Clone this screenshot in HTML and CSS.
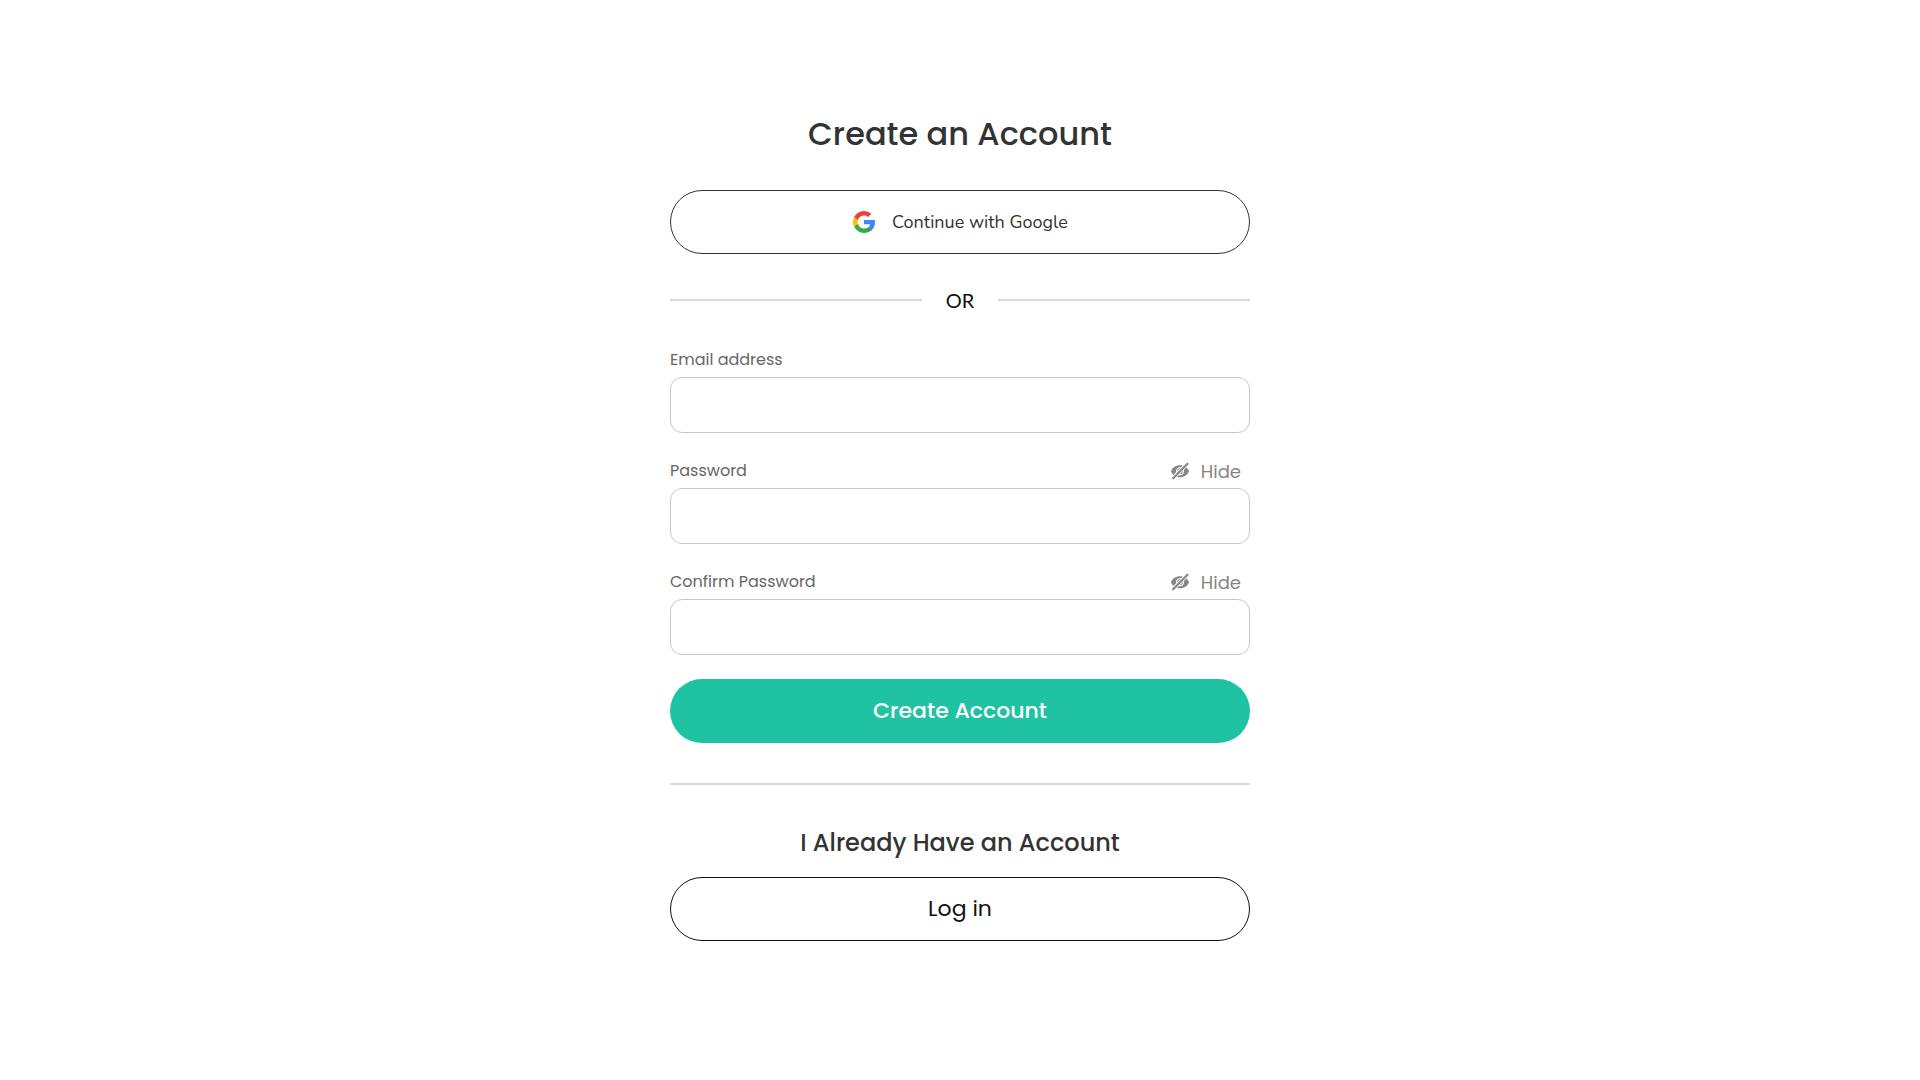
FILE: index.html
```html
<!DOCTYPE html>
<html lang="en">
<head>
<meta charset="utf-8">
<meta name="viewport" content="width=device-width, initial-scale=1">
<title>Create an Account</title>
<link rel="stylesheet" href="styles.css">
</head>
<body>
<svg class="sprite" aria-hidden="true">
  <symbol id="eye-off" viewBox="0 0 24 24">
    <path d="M3 12.2C4 8.8 7.700 6.200 12 6.200s8 2.600 9 6c-1 3.400-4.700 6-9 6s-8-2.600-9-6z" fill="#868686"/>
    <circle cx="12" cy="12.200" r="3.400" fill="none" stroke="#fff" stroke-width="1.100"/>
    <path d="M4 20.100L20 4.100" stroke="#fff" stroke-width="4"/>
    <path d="M5.100 19.200L19.500 4.800" stroke="#868686" stroke-width="2.200" stroke-linecap="round"/>
  </symbol>
</svg>
<main class="signup">
  <h1 class="title">Create an Account</h1>
  <button class="button button-google" type="button">
    <svg class="icon" viewBox="0 0 24 24" aria-hidden="true">
      <path fill="#4285f4" d="M23 12.250c0-.780-.070-1.530-.200-2.250H12v4.260h6.170a5.280 5.280 0 0 1-2.290 3.460v2.770h3.570C21.540 18.570 23 15.680 23 12.250z"/>
      <path fill="#34a853" d="M12 23c2.970 0 5.460-.980 7.450-2.750l-3.570-2.770c-.990.660-2.230 1.060-3.880 1.060-2.860 0-5.290-1.930-6.160-4.530H2.180v2.840A11 11 0 0 0 12 23z"/>
      <path fill="#fbbc05" d="M5.840 14.090a6.610 6.610 0 0 1 0-4.180V7.070H2.180a11 11 0 0 0 0 9.860z"/>
      <path fill="#ea4335" d="M12 5.380c1.620 0 3.060.560 4.210 1.640l3.150-3.150A10.950 10.950 0 0 0 2.180 7.070l3.660 2.840C6.710 7.310 9.140 5.380 12 5.380z"/>
    </svg>
    Continue with Google
  </button>
  <div class="or">OR</div>
  <form class="form">
    <div class="field">
      <div class="field-head"><label for="email">Email address</label></div>
      <input class="input" id="email" type="email">
    </div>
    <div class="field">
      <div class="field-head">
        <label for="password">Password</label>
        <button class="toggle" type="button"><svg class="icon" aria-hidden="true"><use href="#eye-off"/></svg>Hide</button>
      </div>
      <input class="input" id="password" type="password">
    </div>
    <div class="field">
      <div class="field-head">
        <label for="confirm">Confirm Password</label>
        <button class="toggle" type="button"><svg class="icon" aria-hidden="true"><use href="#eye-off"/></svg>Hide</button>
      </div>
      <input class="input" id="confirm" type="password">
    </div>
    <button class="button button-primary" type="submit">Create Account</button>
  </form>
  <hr class="divider">
  <h2 class="subtitle">I Already Have an Account</h2>
  <button class="button button-login" type="button">Log in</button>
</main>
</body>
</html>
```

FILE: styles.css
```css
* {
  box-sizing: border-box;
}

body {
  margin: 0;
  background: #fff;
  color: #111;
  font-family: Poppins, Inter, "Open Sans", sans-serif;
}

.sprite {
  display: none;
}

.signup {
  display: flex;
  flex-direction: column;
  max-width: 628px;
  margin: 0 auto;
  padding: 110px 24px 40px;
}

.title {
  margin: 0 0 32px;
  color: #333;
  font-size: 32px;
  font-weight: 500;
  line-height: 48px;
  text-align: center;
}

.icon {
  flex: none;
  width: 24px;
  height: 24px;
}

.button {
  display: flex;
  align-items: center;
  justify-content: center;
  width: 100%;
  height: 64px;
  padding: 0 24px 2px;
  border: 1px solid #333;
  border-radius: 32px;
  background: #fff;
  color: #111;
  font-family: inherit;
  font-size: 22px;
  cursor: pointer;
}

.button-google {
  gap: 16px;
  padding: 0 24px;
  color: #333;
  font-family: Avenir, Nunito, Lato, sans-serif;
  font-size: 18px;
}

.button-primary {
  border: 0;
  background: #1fc3a3;
  color: #fff;
  font-weight: 500;
}

.button-login {
  border-color: #111;
}

.or {
  display: flex;
  align-items: center;
  gap: 24px;
  margin: 30px 0;
  font-family: Avenir, Lato, sans-serif;
  font-size: 20px;
  line-height: 32px;
}

.or::before,
.or::after {
  flex: 1;
  height: 2px;
  background: #d9d9d9;
  content: "";
}

.form {
  display: flex;
  flex-direction: column;
  gap: 24px;
}

.field-head {
  display: flex;
  align-items: center;
  justify-content: space-between;
  height: 26px;
  margin-bottom: 5px;
  color: #666;
  font-size: 16px;
}

.toggle {
  display: flex;
  align-items: center;
  gap: 9px;
  padding: 2px 9px 0;
  border: 0;
  background: none;
  color: #858585;
  font-family: inherit;
  font-size: 18px;
  cursor: pointer;
}

.input {
  display: block;
  width: 100%;
  height: 56px;
  padding: 0 16px;
  border: 1px solid #c8c8c8;
  border-radius: 12px;
  background: #fff;
  color: #111;
  font-family: inherit;
  font-size: 16px;
}

.divider {
  width: 100%;
  height: 2px;
  margin: 40px 0;
  border: 0;
  background: #d9d9d9;
}

.subtitle {
  margin: 0 0 16px;
  color: #333;
  font-size: 24px;
  font-weight: 500;
  line-height: 36px;
  text-align: center;
}
```
